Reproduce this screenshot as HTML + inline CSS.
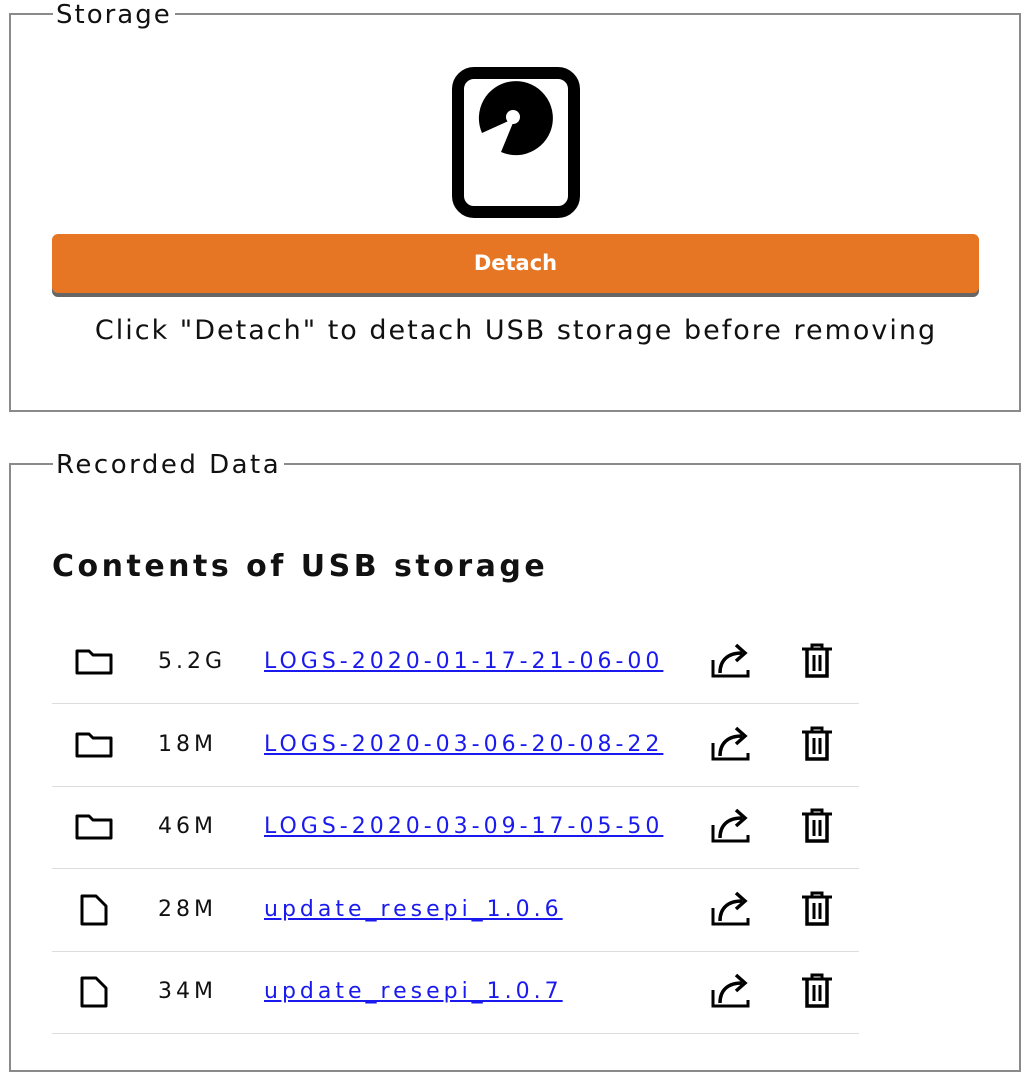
<!DOCTYPE html>
<html><head><meta charset="utf-8"><style>
body{margin:0;width:1032px;height:1076px;background:#fff;position:relative;font-family:"DejaVu Sans","Liberation Sans",sans-serif;color:#111;overflow:hidden}
.fs{position:absolute;border:2px solid #8a8a8a;box-sizing:border-box}
.lg{position:absolute;background:#fff;padding:0 3px;font-size:26px;line-height:30px;letter-spacing:2px}
.btn{position:absolute;left:52px;top:234px;width:927px;height:59px;background:#e67624;border-radius:6px;box-shadow:0 4px 0 #666;color:#fff;font-weight:bold;font-size:21px;text-align:center;line-height:59px;font-family:"DejaVu Sans",sans-serif}
.row{position:absolute;left:52px;width:807px;height:82px;border-bottom:1px solid #ddd}
.sz{position:absolute;left:106px;top:0;line-height:82px;font-size:22px;letter-spacing:4px}
.ln{position:absolute;left:212px;top:0;line-height:82px;font-size:22px;letter-spacing:4px;color:#1a1aee;text-decoration:underline}
.ic{position:absolute}
</style></head><body>
<div class="fs" style="left:9px;top:13px;width:1012px;height:399px"></div>
<div class="lg" style="left:53px;top:0">Storage</div>
<svg class="ic" style="left:452px;top:67px" width="128" height="151" viewBox="0 0 128 151">
<rect x="6" y="6" width="116" height="139" rx="16" fill="none" stroke="#000" stroke-width="12"/>
<path d="M63 51 L30 66 A37 37 0 1 1 49 85 Z" fill="#000"/>
<circle cx="61" cy="50" r="7" fill="#fff"/>
</svg>
<div class="btn">Detach</div>
<div style="position:absolute;left:0;width:1032px;top:312px;text-align:center;font-size:27px;letter-spacing:2px;line-height:38px">Click "Detach" to detach USB storage before removing</div>

<div class="fs" style="left:9px;top:463px;width:1012px;height:609px"></div>
<div class="lg" style="left:53px;top:450px;letter-spacing:2.5px">Recorded Data</div>
<div style="position:absolute;left:52px;top:547px;font-size:30px;font-weight:bold;letter-spacing:3.5px;line-height:40px">Contents of USB storage</div>

<div class="row" style="top:621px"><svg class="ic" style="left:22px;top:27px" width="40" height="28" viewBox="0 0 40 28"><path d="M3 3 H15 L19 7 H37 V25 H3 Z" fill="none" stroke="#000" stroke-width="3" stroke-linejoin="round"/></svg><span class="sz">5.2G</span><span class="ln">LOGS-2020-01-17-21-06-00</span></div>
<div class="row" style="top:704px"><svg class="ic" style="left:22px;top:27px" width="40" height="28" viewBox="0 0 40 28"><path d="M3 3 H15 L19 7 H37 V25 H3 Z" fill="none" stroke="#000" stroke-width="3" stroke-linejoin="round"/></svg><span class="sz">18M</span><span class="ln">LOGS-2020-03-06-20-08-22</span></div>
<div class="row" style="top:786px"><svg class="ic" style="left:22px;top:27px" width="40" height="28" viewBox="0 0 40 28"><path d="M3 3 H15 L19 7 H37 V25 H3 Z" fill="none" stroke="#000" stroke-width="3" stroke-linejoin="round"/></svg><span class="sz">46M</span><span class="ln">LOGS-2020-03-09-17-05-50</span></div>
<div class="row" style="top:869px"><svg class="ic" style="left:27px;top:24px" width="30" height="34" viewBox="0 0 30 34"><path d="M3 3 H17 L27 13 V31 H3 Z" fill="none" stroke="#000" stroke-width="3" stroke-linejoin="round"/></svg><span class="sz">28M</span><span class="ln">update_resepi_1.0.6</span></div>
<div class="row" style="top:951px"><svg class="ic" style="left:27px;top:24px" width="30" height="34" viewBox="0 0 30 34"><path d="M3 3 H17 L27 13 V31 H3 Z" fill="none" stroke="#000" stroke-width="3" stroke-linejoin="round"/></svg><span class="sz">34M</span><span class="ln">update_resepi_1.0.7</span></div>

<div id="acts"></div>
<script>
var ys=[662,745,827,910,992],h='';
ys.forEach(function(y){
h+='<svg class="ic" style="left:710px;top:'+(y-20)+'px" width="42" height="38" viewBox="0 0 42 38"><path d="M3 18 V34 H38 V28" fill="none" stroke="#000" stroke-width="3"/><path d="M10 31 C10 18 18 11 32 11" fill="none" stroke="#000" stroke-width="3.5"/><path d="M26 3 L35 11 L26 19" fill="none" stroke="#000" stroke-width="3.5"/></svg>';
h+='<svg class="ic" style="left:801px;top:'+(y-19)+'px" width="32" height="36" viewBox="0 0 32 36"><path d="M1 6 H31 M11 6 V2 H21 V6" fill="none" stroke="#000" stroke-width="3"/><path d="M6 7 V33 H26 V7" fill="none" stroke="#000" stroke-width="3.5"/><path d="M13 12 V28 M19 12 V28" stroke="#000" stroke-width="3"/></svg>';
});
document.getElementById('acts').innerHTML=h;
</script>
</body></html>
